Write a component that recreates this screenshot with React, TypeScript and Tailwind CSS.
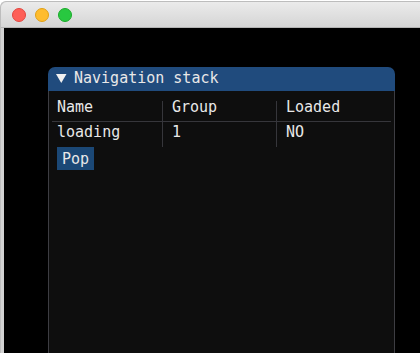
const mono = { fontFamily: '"DejaVu Sans Mono", monospace' };

const columns = ['Name', 'Group', 'Loaded'];
const rows = [['loading', '1', 'NO']];

function TrafficLights() {
  return (
    <div className="flex items-center gap-[9px] pl-[11px]">
      <span className="w-[14px] h-[14px] rounded-full bg-[#fe5f57] border border-[#e2463f]" />
      <span className="w-[14px] h-[14px] rounded-full bg-[#febc2e] border border-[#e1a116]" />
      <span className="w-[14px] h-[14px] rounded-full bg-[#28c840] border border-[#1aab29]" />
    </div>
  );
}

function NavigationWindow() {
  return (
    <div className="w-[347px] flex-1 flex flex-col text-[15px] text-[#e8e8e8]" style={mono}>
      {/* title bar */}
      <div className="h-[24px] flex items-start rounded-t-[7px] bg-[#204b7d] pl-[8px]">
        <svg width="11" height="10" viewBox="0 0 11 10" className="mt-[7px]">
          <polygon points="0,0 10.5,0 5.25,9" fill="#f0f0f0" />
        </svg>
        <span className="ml-[7px] mt-[4px] leading-[13px] pt-[1px]">Navigation stack</span>
      </div>

      {/* body */}
      <div className="flex-1 bg-[#0e0e0e] border-x border-[#3d3d42] pl-[3px] pt-[10px]">
        <div className="w-[339px]">
          <div className="grid grid-cols-[110px_114px_115px] h-[21px] border-b border-[#36363b] leading-[13px]">
            {columns.map((c, i) => (
              <div key={c} className={i === 0 ? 'pl-[5px]' : 'pl-[9px] border-l border-[#36363b]'}>
                {c}
              </div>
            ))}
          </div>
          {rows.map((r) => (
            <div key={r[0]} className="grid grid-cols-[110px_114px_115px] h-[25px] leading-[13px]">
              {r.map((v, i) => (
                <div key={i} className={i === 0 ? 'pl-[5px] pt-[4px]' : 'pl-[9px] pt-[4px] border-l border-[#36363b]'}>
                  {v}
                </div>
              ))}
            </div>
          ))}
        </div>
        <button className="block ml-[5px] h-[23px] px-[5px] bg-[#1b4876] leading-[13px] pt-[2px] text-[#e8e8e8]" style={mono}>
          Pop
        </button>
      </div>
    </div>
  );
}

export default function App() {
  return (
    <div className="w-[420px] h-[353px] bg-white overflow-hidden">
      <div className="w-[430px] h-[353px] flex flex-col rounded-tl-[6px] border-l border-t border-[#bdbdbd] bg-[#d2d2d2] mt-[1px]">
        <div className="h-[26px] flex items-center bg-gradient-to-b from-[#ebebeb] to-[#d5d5d5] border-b border-[#b3b3b3] rounded-tl-[6px]">
          <TrafficLights />
        </div>
        <div className="flex-1 ml-[3px] bg-black flex flex-col pl-[44px] pt-[39px]">
          <NavigationWindow />
        </div>
      </div>
    </div>
  );
}
